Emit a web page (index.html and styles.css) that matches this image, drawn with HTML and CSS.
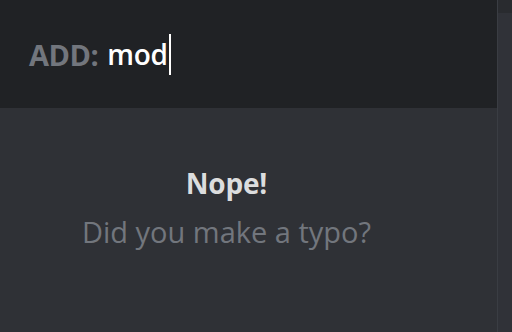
FILE: index.html
```html
<!DOCTYPE html>
<html>
<head>
<meta charset="utf-8">
<link rel="stylesheet" href="styles.css">
</head>
<body>
<div class="app">
  <div class="panel">
    <div class="header">
      <span class="label">ADD:</span>
      <span class="query">mod</span><span class="caret"></span>
    </div>
    <div class="body">
      <div class="empty">
        <div class="title">Nope!</div>
        <div class="sub">Did you make a typo?</div>
      </div>
    </div>
  </div>
  <div class="rail">
    <div class="rail-top"></div>
    <div class="rail-track"></div>
  </div>
</div>
</body>
</html>
```

FILE: styles.css
```css
html, body {
  margin: 0;
  padding: 0;
  width: 512px;
  height: 332px;
  overflow: hidden;
  background: #2f3136;
  font-family: "Open Sans", "Noto Sans", sans-serif;
}
.app {
  display: flex;
  width: 512px;
  height: 332px;
}
.panel {
  width: 498px;
  display: flex;
  flex-direction: column;
  border-right: 1px solid #3a3d43;
  box-sizing: border-box;
}
.header {
  height: 108px;
  background: #202225;
  display: flex;
  align-items: center;
  padding-left: 29px;
  box-sizing: border-box;
}
.label {
  font-size: 29px;
  font-weight: 700;
  color: #72767d;
  margin-right: 9px;
  line-height: 1;
  letter-spacing: -0.5px;
}
.query {
  font-size: 28px;
  font-weight: 600;
  color: #ffffff;
  line-height: 1;
  letter-spacing: -0.2px;
}
.caret {
  width: 2px;
  height: 41px;
  background: #ffffff;
  margin-left: 1px;
}
.body {
  flex: 1;
  background: #2f3136;
  display: flex;
  justify-content: center;
  padding-right: 44px;
}
.empty {
  display: flex;
  flex-direction: column;
  align-items: center;
  padding-top: 57px;
}
.title {
  font-size: 28px;
  font-weight: 700;
  color: #dcddde;
  line-height: 36px;
  letter-spacing: -0.2px;
}
.sub {
  font-size: 29px;
  font-weight: 400;
  color: #72767d;
  line-height: 38px;
  margin-top: 12px;
}
.rail {
  flex: 1;
  display: flex;
  flex-direction: column;
  background: #2e3035;
}
.rail-top {
  height: 13px;
  background: #292b2f;
}
.rail-track {
  flex: 1;
  background: #303238;
}
```
